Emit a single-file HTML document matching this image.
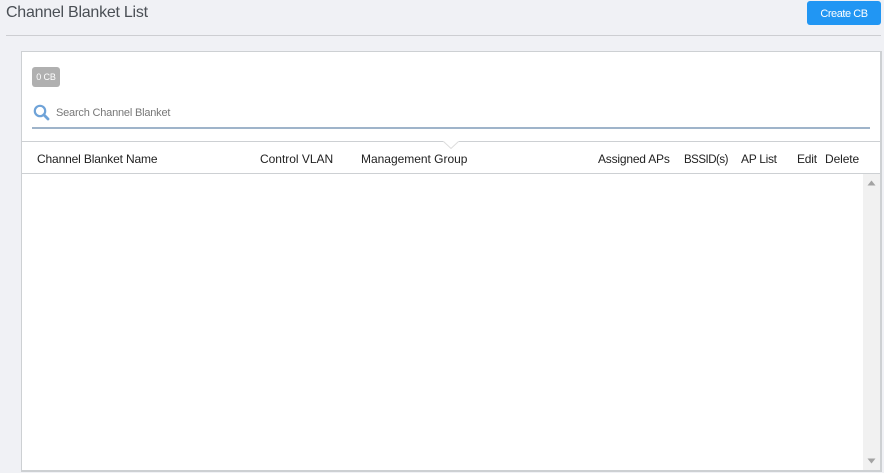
<!DOCTYPE html>
<html><head><meta charset="utf-8">
<style>
html,body{margin:0;padding:0}
body{width:884px;height:473px;background:#f0f1f5;position:relative;overflow:hidden;font-family:"Liberation Sans",sans-serif;color:#222}
.a{position:absolute;white-space:nowrap}
.th{font-size:12px;line-height:16px;top:151px;color:#222}
</style></head><body>
<div class="a" style="left:6px;top:3px;font-size:16px;line-height:20px;color:#4a4f55;letter-spacing:-.25px">Channel Blanket List</div>
<div class="a" style="left:807px;top:1px;width:74px;height:24px;background:#2196f3;border-radius:3px;color:#fff;font-size:11px;line-height:26px;text-align:center;letter-spacing:-.45px">Create CB</div>
<div class="a" style="left:6px;top:35px;width:875px;height:1px;background:#cdced2"></div>
<div class="a" style="left:21px;top:51px;width:858px;height:418px;background:#fff;border:1px solid #cdd0d3;border-width:1px 2px 2px 1px"></div>
<div class="a" style="left:32px;top:67px;width:28px;height:20px;background:#b0b0b0;border-radius:3px;color:#fff;font-size:9px;line-height:21px;text-align:center;letter-spacing:-.1px">0 CB</div>
<svg class="a" style="left:33px;top:104px" width="17" height="17" viewBox="0 0 17 17"><circle cx="7" cy="7" r="5.2" fill="none" stroke="#6fa3d8" stroke-width="2.2"/><path d="M10.8 10.8L15 15" stroke="#6fa3d8" stroke-width="2.8" stroke-linecap="round"/></svg>
<div class="a" style="left:56px;top:105px;font-size:11px;line-height:16px;color:#777;letter-spacing:-.2px">Search Channel Blanket</div>
<div class="a" style="left:32px;top:127px;width:838px;height:2px;background:#9fb4ca"></div>
<div class="a" style="left:22px;top:141px;width:858px;height:1px;background:#cdd0d3"></div>
<svg class="a" style="left:443px;top:141px" width="16" height="9" viewBox="0 0 16 9"><path d="M0 0L8 8L16 0" fill="#fff"/><path d="M0.5 0.5L8 7.5L15.5 0.5" fill="#fff" stroke="#dcdcdc" stroke-width="1"/></svg>
<div class="a th" style="left:37px;letter-spacing:-.15px">Channel Blanket Name</div>
<div class="a th" style="left:260px;letter-spacing:-.02px">Control VLAN</div>
<div class="a th" style="left:361px;letter-spacing:-.02px">Management Group</div>
<div class="a th" style="left:598px;letter-spacing:-.2px">Assigned APs</div>
<div class="a th" style="left:684px;top:152px;font-size:11.5px;letter-spacing:-.5px">BSSID(s)</div>
<div class="a th" style="left:741px;letter-spacing:-.3px">AP List</div>
<div class="a th" style="left:797px;letter-spacing:-.2px">Edit</div>
<div class="a th" style="left:825px;letter-spacing:-.1px">Delete</div>
<div class="a" style="left:22px;top:173px;width:858px;height:1px;background:#cdd0d3"></div>
<div class="a" style="left:863px;top:174px;width:17px;height:296px;background:#f1f1f1"></div>
<svg class="a" style="left:867px;top:180px" width="9" height="6" viewBox="0 0 9 6"><path d="M4.5 0.5L8.5 5.5H0.5Z" fill="#a3a3a3"/></svg>
<svg class="a" style="left:867px;top:458px" width="9" height="6" viewBox="0 0 9 6"><path d="M0.5 0.5H8.5L4.5 5.5Z" fill="#a3a3a3"/></svg>
</body></html>
